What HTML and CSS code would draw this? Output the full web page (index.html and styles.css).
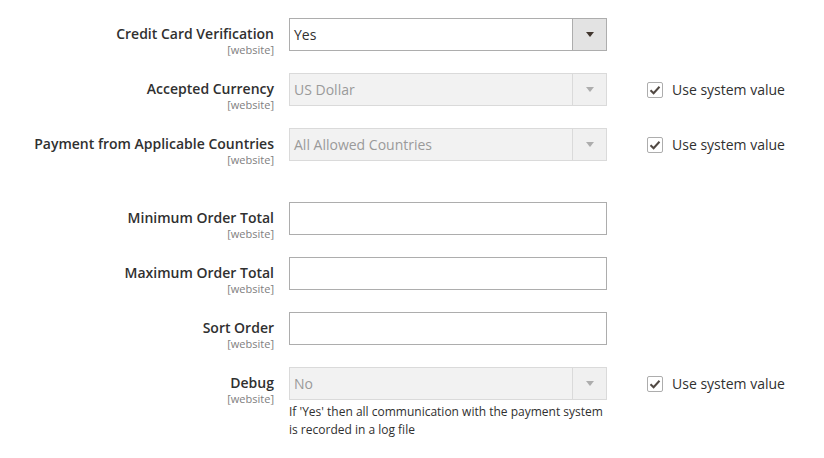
FILE: index.html
```html
<!DOCTYPE html>
<html>
<head>
<meta charset="utf-8">
<link rel="stylesheet" href="styles.css">
</head>
<body>
<div class="form">
  <div class="row">
    <div class="label"><span class="title">Credit Card Verification</span><span class="scope">[website]</span></div>
    <div class="control">
      <div class="select"><span class="value">Yes</span><span class="btn"><span class="arrow"></span></span></div>
    </div>
  </div>
  <div class="row">
    <div class="label"><span class="title">Accepted Currency</span><span class="scope">[website]</span></div>
    <div class="control">
      <div class="select disabled"><span class="value">US Dollar</span><span class="btn"><span class="arrow"></span></span></div>
    </div>
    <div class="default"><span class="check"><svg width="12" height="10" viewBox="0 0 12 10"><path d="M1.5 5.2 L4.6 8.2 L10.5 1.8" fill="none" stroke="#514943" stroke-width="2"/></svg></span>Use system value</div>
  </div>
  <div class="row">
    <div class="label"><span class="title">Payment from Applicable Countries</span><span class="scope">[website]</span></div>
    <div class="control">
      <div class="select disabled"><span class="value">All Allowed Countries</span><span class="btn"><span class="arrow"></span></span></div>
    </div>
    <div class="default"><span class="check"><svg width="12" height="10" viewBox="0 0 12 10"><path d="M1.5 5.2 L4.6 8.2 L10.5 1.8" fill="none" stroke="#514943" stroke-width="2"/></svg></span>Use system value</div>
  </div>
  <div class="row spaced">
    <div class="label"><span class="title">Minimum Order Total</span><span class="scope">[website]</span></div>
    <div class="control"><div class="input"></div></div>
  </div>
  <div class="row">
    <div class="label"><span class="title">Maximum Order Total</span><span class="scope">[website]</span></div>
    <div class="control"><div class="input"></div></div>
  </div>
  <div class="row">
    <div class="label"><span class="title">Sort Order</span><span class="scope">[website]</span></div>
    <div class="control"><div class="input"></div></div>
  </div>
  <div class="row">
    <div class="label"><span class="title">Debug</span><span class="scope">[website]</span></div>
    <div class="control">
      <div class="select disabled"><span class="value">No</span><span class="btn"><span class="arrow"></span></span></div>
      <p class="note">If 'Yes' then all communication with the payment system is recorded in a log file</p>
    </div>
    <div class="default"><span class="check"><svg width="12" height="10" viewBox="0 0 12 10"><path d="M1.5 5.2 L4.6 8.2 L10.5 1.8" fill="none" stroke="#514943" stroke-width="2"/></svg></span>Use system value</div>
  </div>
</div>
</body>
</html>
```

FILE: styles.css
```css
html, body {
  margin: 0;
  padding: 0;
  background: #ffffff;
}
body {
  font-family: "Open Sans", "Liberation Sans", sans-serif;
  color: #303030;
}
.form {
  display: flex;
  flex-direction: column;
  gap: 22px;
  padding-top: 18px;
}
.row {
  display: grid;
  grid-template-columns: 274px 318px auto;
  column-gap: 15px;
  align-items: start;
}
.row.spaced {
  margin-top: 19px;
}
.label {
  display: flex;
  flex-direction: column;
  align-items: flex-end;
  text-align: right;
  padding-top: 6px;
  margin-bottom: -8px;
}
.title {
  font-size: 14px;
  font-weight: 600;
  line-height: 19px;
  color: #303030;
}
.scope {
  font-size: 11px;
  line-height: 14px;
  color: #808080;
}
.control {
  width: 318px;
}
.select, .input {
  box-sizing: border-box;
  height: 33px;
  border: 1px solid #adadad;
  background: #ffffff;
  display: flex;
  align-items: stretch;
}
.select .value {
  flex: 1;
  font-size: 14px;
  line-height: 31px;
  padding-left: 4px;
  color: #303030;
}
.select .btn {
  width: 33px;
  border-left: 1px solid #adadad;
  background: #e3e3e3;
  display: flex;
  align-items: center;
  justify-content: center;
}
.arrow {
  width: 0;
  height: 0;
  border-left: 4px solid transparent;
  border-right: 4px solid transparent;
  border-top: 5px solid #41362f;
}
.select.disabled {
  border-color: #dadada;
  background: #f2f2f2;
}
.select.disabled .value {
  color: #9a9a9a;
}
.select.disabled .btn {
  border-left-color: #dadada;
  background: #f0f0f0;
}
.select.disabled .arrow {
  border-top-color: #adadad;
}
.note {
  margin: 3px 0 0;
  font-size: 12px;
  line-height: 18px;
  color: #303030;
}
.default {
  display: flex;
  align-items: center;
  gap: 9px;
  margin-left: 25px;
  height: 33px;
  font-size: 14px;
  color: #303030;
}
.check {
  box-sizing: border-box;
  width: 16px;
  height: 16px;
  border: 1px solid #adadad;
  border-radius: 2px;
  background: #fff;
  display: flex;
  align-items: center;
  justify-content: center;
}
```
